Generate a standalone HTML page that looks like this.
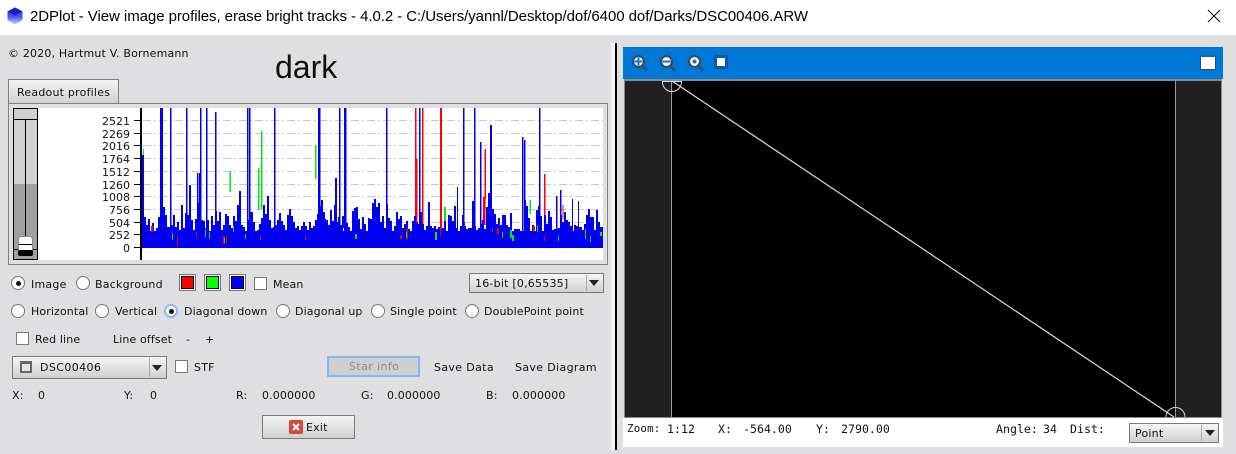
<!DOCTYPE html>
<html><head><meta charset="utf-8"><style>
html,body{margin:0;padding:0;background:#dfdfe1}
#p{position:relative;width:1236px;height:454px;overflow:hidden;background:#dfdfe1;font-family:"DejaVu Sans",sans-serif;font-size:11px;color:#111}
.a{position:absolute;box-sizing:border-box}
.t{position:absolute;white-space:nowrap;line-height:14px;height:14px;font-size:11px;letter-spacing:.22px}
.n{letter-spacing:.12px}
.m{font-family:"DejaVu Sans Mono",monospace;font-size:11.6px;letter-spacing:0}
.r{position:absolute;box-sizing:border-box;width:14px;height:14px;border-radius:50%;background:#fff;border:1px solid #777}
.r.c:after{content:"";position:absolute;left:3.5px;top:3.5px;width:5px;height:5px;border-radius:50%;background:#111}
.cb{position:absolute;box-sizing:border-box;width:13px;height:13px;background:#fff;border:1px solid #777}
.sw{position:absolute;box-sizing:border-box;width:17px;height:17px;border:1px solid #777;background:#fff;padding:1px}
.sw i{display:block;width:13px;height:13px;border:1px solid #000;box-sizing:border-box}
.btn{background:linear-gradient(#f6f6f6,#cfcfcf);border:1px solid #7a7a7a}
.arrow{position:absolute;width:0;height:0;border-left:5.5px solid transparent;border-right:5.5px solid transparent;border-top:6px solid #222}
</style></head><body><div id="p">

<!-- Title bar -->
<div class="a" style="left:0;top:0;width:1236px;height:35px;background:#fff"></div>
<svg class="a" style="left:6px;top:7px" width="18" height="18" viewBox="0 0 18 18"><defs><linearGradient id="g" x1="0" y1="0" x2="0" y2="1"><stop offset="0" stop-color="#2a2ae0"/><stop offset=".55" stop-color="#4a5af0"/><stop offset="1" stop-color="#c8d4ff"/></linearGradient></defs><path d="M9 .5 16.5 4.5V13L9 17.5 1.5 13V4.5Z" fill="url(#g)"/><path d="M9 .5 16.5 4.5 9 8.5 1.5 4.5Z" fill="#1a1ac8"/></svg>
<div class="t" style="left:30px;top:8px;height:18px;line-height:18px;font-family:'Liberation Sans',sans-serif;font-size:15px;letter-spacing:-.06px;color:#000">2DPlot - View image profiles, erase bright tracks - 4.0.2 - C:/Users/yannl/Desktop/dof/6400 dof/Darks/DSC00406.ARW</div>
<svg class="a" style="left:1207px;top:9px" width="14" height="14"><path d="M1 1 13 13M13 1 1 13" stroke="#111" stroke-width="1.1"/></svg>

<!-- Header -->
<div class="t" style="left:8px;top:47px;font-size:11px;letter-spacing:.18px">© 2020, Hartmut V. Bornemann</div>
<div class="t" style="left:275px;top:48px;height:38px;line-height:38px;font-family:'Liberation Sans',sans-serif;font-size:32px;letter-spacing:0;color:#111">dark</div>

<!-- Tab -->
<div class="a" style="left:8px;top:79px;width:111px;height:25px;background:linear-gradient(#f4f4f4,#d0d0d0);border:1px solid #808080;border-bottom:0"></div>
<div class="t" style="left:17px;top:86px">Readout profiles</div>

<!-- Chart panel -->
<div class="a" style="left:8px;top:103px;width:600px;height:162px;border:1px solid #808080;background:#dfdfe1"></div>
<div class="a" style="left:13px;top:108px;width:590px;height:152px;background:#fff"></div>

<svg class="a" style="left:0;top:0" width="620" height="270">
<defs><clipPath id="cl"><rect x="142" y="100" width="461" height="150"/></clipPath></defs>
<!-- slider -->
<rect x="13.500" y="108.500" width="24" height="151" fill="#d0d0d0" stroke="#000"/>
<rect x="14" y="184" width="23" height="75" fill="#a0a0a0"/>
<path d="M14 119.500H37M25.500 119.500V250M14 249.500H37" stroke="#000" fill="none"/>
<rect x="18.500" y="236.500" width="14" height="19" rx="3" fill="#fff" stroke="#888"/>
<rect x="18" y="250" width="15" height="6" rx="2" fill="#000"/>
<path d="M19 244.500H32" stroke="#000"/>
<!-- grid -->
<g stroke="#c8c8c8" stroke-width="1" stroke-dasharray="8 3 2 3" fill="none">
<path d="M143 120.500H603M143 133.500H603M143 145.500H603M143 158.500H603M143 171.500H603M143 184.500H603M143 196.500H603M143 209.500H603M143 222.500H603M143 234.500H603"/>
</g>
<!-- ticks -->
<path d="M134 120.500H141M134 133.500H141M134 145.500H141M134 158.500H141M134 171.500H141M134 184.500H141M134 196.500H141M134 209.500H141M134 222.500H141M134 234.500H141M134 247.500H141" stroke="#000"/>
<rect x="140" y="108" width="2" height="152" fill="#000"/>
<g font-family="DejaVu Sans,sans-serif" font-size="11" fill="#111" text-anchor="end">
<text x="130" y="125">2521</text><text x="130" y="138">2269</text><text x="130" y="150">2016</text><text x="130" y="163">1764</text><text x="130" y="176">1512</text><text x="130" y="189">1260</text><text x="130" y="201">1008</text><text x="130" y="214">756</text><text x="130" y="227">504</text><text x="130" y="239">252</text><text x="130" y="252">0</text>
</g>
<!-- green / red behind -->
<path d="M143 149h1v28h-1zM229.500 171h1.500v21h-1.500zM258 168h1.500v42H258zM261 131h1.500v78H261zM315 145h1.500v34H315zM529.500 200h1.500v14h-1.500zM444 207h2v18h-2zM172 231h2v8h-2zM151 228h2v5h-2z" fill="#00e81a"/>
<path d="M396 212h2v36h-2zM415 108h1.500v51H415zM415 159h2.500v81H415zM422 108h1.500v118H422zM440 108h2v130h-2zM484.500 149h1.500v50h-1.500zM483 197h2.500v28H483zM544 174h1.500v60H544zM562.500 205h1v14h-1zM378 222h2v10h-2zM463 222h2v8h-2z" fill="#f00"/>
<!-- blue bars -->
<rect x="142" y="231" width="461" height="17" fill="#0000f0"/>
<path clip-path="url(#cl)" fill="#0000f0" d="M142 248V155h2V217h2V225h2V219h2V235h2V223h2V233h2V228h2V217h2V108h3V207h2V215h2V227h2V227h2V225h2V215h2V227h2V222h2V230h2V205h2V228h2V213h2V215h2V185h2V220h2V230h2V219h2V203h2V173h2V220h2V221h2V228h2V220h2V232h2V216h2V225h2V211h2V221h2V212h2V230h2V225h2V214h2V216h2V225h2V228h2V216h2V221h2V205h2V191h2V225h2V227h2V234h2V220h2V212h2V212h2V222h2V232h2V230h2V224h2V218h2V205h2V214h2V196h2V220h2V228h2V227h2V225h2V220h2V213h2V221h2V225h2V230h2V215h2V209h2V216h2V222h2V228h2V226h2V230h2V226h2V222h2V226h2V230h2V222h2V228h2V226h2V220h2V214h2V206h2V200h2V212h2V220h2V226h2V228h2V226h2V222h2V178h2V222h2V228h2V226h2V232h2V228H320V215h2V228h2V219h2V220h2V225h2V210h2V221h2V205h2V228h2V217h2V225h2V216h2V233h2V223h2V227h2V234h2V211h2V208h2V207h2V219h2V229h2V217h2V224h2V232h2V218h2V219h2V203h2V199h2V207h2V203h2V222h2V216h2V228h2V204h2V218h2V221h2V235h2V226h2V212h2V219h2V216h2V228h2V224h2V221h2V229h2V232h2V221h2V216h2V222h2V224h2V212h2V224h2V230h2V226h2V202h2V226h2V228h2V226h2V229h2V227h2V229h2V228h2V221h2V232h2V215h2V216h2V221h2V206h2V228h2V232h2V226h2V215h2V226h2V229h2V228h2V228h2V201h2V226h2V230h2V228h2V224h2V220h2V229h2V207h2V212h2V225h2V209h2V214h2V224h2V218h2V225h2V215h2V215h2V225h2V227h2V213h2V233h2V229h2V229h2V229h2V234h2V233h2V200h2V206h2V218h2V231h2V225h2V232h2V210h2V206h2V216h2V234h2V215h2V224h2V211h2V217h2V230h2V229h2V229h2V228h2V215h2V222h2V212h2V220h2V222h2V226h2V232h2V225h2V226h2V227h2V227h2V230h2V224h2V215h2V209h2V217h2V217h2V230h2V210h2V222h2V227h2V227h2V225h2V217h2V230h2V226h2V218h2V219h2V227h2V230h2V223h2V228h2V229h2V215h2V225h2V209h2V231h2V228h2V234h2V220h2V224h2V222h2V222h2V231h2V234h2V236h2V225h2V228h2V222h2V232h2V226h2V228h2V224h2V232h2V225h2V231h2V212h2V233V248Z"/>
<path fill="#0000f0" d="M170 108h1.500v139H170zM186 108h1.500v139H186zM200 108h1.500v139H200zM206 108h1.500v139H206zM215 112h1.500v135H215zM247 108h1.500v139H247zM249 108h1.500v139H249zM274 108h1.500v139H274zM339 108h1.500v139H339zM344 108h2.500v139H344zM386 108h1.500v139H386zM419 108h1.500v139H419zM463 108h1.500v139H463zM474 108h1.500v139H474zM480 142h1.500v105H480zM539 108h1.500v139H539zM522 137h1.500v110H522zM524 140h1.500v107H524zM318 108h2.500v139H318zM197 173h1.500v74H197zM490 125h2v122h-2zM488 193h2v54h-2zM457 187h1v60h-1zM556 196h1.500v51H556zM560 190h1.500v57H560zM572 199h1v48h-1zM578 201h1v46h-1z"/>
<!-- colour flecks on top -->
<path d="M151 226h2v6h-2zM177 236h1v10h-1zM223 236h2v8h-2zM226 236h1v7h-1zM196 232h1v6h-1zM260 236h1v4h-1zM305 236h1v4h-1zM400 235h2v4h-2zM440 230h1v6h-1zM544 236h1v5h-1zM533 226h2v6h-2zM497 228h2v6h-2zM406 229h2v10h-2zM492 228h1v4h-1z" fill="#f00"/>
<path d="M172 233h1v7h-1zM205 229h1v8h-1zM209 232h1v7h-1zM224 238h1v5h-1zM233 226h1v6h-1zM245 234h1v5h-1zM355 234h2v5h-2zM406 232h1v6h-1zM502 232h1v6h-1zM510 230h2v8h-2zM537 225h1v7h-1zM558 236h1v5h-1zM585 229h1v10h-1zM590 236h1v6h-1zM600 232h2v4h-2zM435 232h2v8h-2zM512 235h2v6h-2z" fill="#00e81a"/>
</svg>

<!-- Row 1 -->
<div class="r c" style="left:11px;top:276px"></div><div class="t" style="left:31px;top:278px">Image</div>
<div class="r" style="left:76px;top:276px"></div><div class="t" style="left:95px;top:278px">Background</div>
<div class="sw" style="left:179px;top:274px"><i style="background:#f00"></i></div>
<div class="sw" style="left:204px;top:274px"><i style="background:#0f0"></i></div>
<div class="sw" style="left:229px;top:274px"><i style="background:#00f"></i></div>
<div class="cb" style="left:254px;top:277px"></div><div class="t n" style="left:273px;top:278px">Mean</div>
<div class="a btn" style="left:469px;top:273px;width:135px;height:20px"></div>
<div class="a" style="left:586px;top:275px;width:1px;height:16px;background:#aaa"></div>
<div class="arrow" style="left:589px;top:280px"></div>
<div class="t" style="left:475px;top:277px">16-bit [0,65535]</div>

<!-- Row 2 -->
<div class="r" style="left:11px;top:304px"></div><div class="t n" style="left:31px;top:305px">Horizontal</div>
<div class="r" style="left:95px;top:304px"></div><div class="t n" style="left:115px;top:305px">Vertical</div>
<div class="r c" style="left:164px;top:304px;border-color:#8ab4f8;box-shadow:0 0 0 1px #8ab4f8 inset"></div><div class="t n" style="left:184px;top:305px">Diagonal down</div>
<div class="r" style="left:276px;top:304px"></div><div class="t n" style="left:295px;top:305px">Diagonal up</div>
<div class="r" style="left:371px;top:304px"></div><div class="t n" style="left:390px;top:305px">Single point</div>
<div class="r" style="left:465px;top:304px"></div><div class="t n" style="left:484px;top:305px">DoublePoint point</div>

<!-- Row 3 -->
<div class="cb" style="left:16px;top:332px"></div><div class="t n" style="left:35px;top:333px">Red line</div>
<div class="t n" style="left:113px;top:333px">Line offset</div>
<div class="t" style="left:186px;top:333px">-</div><div class="t" style="left:205px;top:333px">+</div>

<!-- Row 4 -->
<div class="a btn" style="left:12px;top:356px;width:155px;height:23px"></div>
<div class="a" style="left:149px;top:358px;width:1px;height:19px;background:#aaa"></div>
<div class="arrow" style="left:152px;top:365px"></div>
<div class="a" style="left:20px;top:361px;width:12px;height:12px;border:2px solid #666;border-top-width:3px;background:#e4e4e4"></div>
<div class="t" style="left:40px;top:361px;letter-spacing:.4px">DSC00406</div>
<div class="cb" style="left:175px;top:360px"></div><div class="t" style="left:194px;top:361px">STF</div>
<div class="a" style="left:327px;top:356px;width:93px;height:21px;background:#cfcfcf;border:2px solid #8ab4f8"></div>
<div class="t" style="left:349px;top:360px;color:#8c8c8c;letter-spacing:.4px">Star info</div>
<div class="t" style="left:434px;top:361px;letter-spacing:.35px">Save Data</div>
<div class="t" style="left:515px;top:361px;letter-spacing:.35px">Save Diagram</div>

<!-- Row 5 -->
<div class="t" style="left:12px;top:389px">X:</div><div class="t" style="left:38px;top:389px">0</div>
<div class="t" style="left:124px;top:389px">Y:</div><div class="t" style="left:150px;top:389px">0</div>
<div class="t" style="left:236px;top:389px">R:</div><div class="t n" style="left:262px;top:389px">0.000000</div>
<div class="t" style="left:361px;top:389px">G:</div><div class="t n" style="left:387px;top:389px">0.000000</div>
<div class="t" style="left:486px;top:389px">B:</div><div class="t n" style="left:512px;top:389px">0.000000</div>

<!-- Exit -->
<div class="a btn" style="left:262px;top:415px;width:93px;height:24px"></div>
<svg class="a" style="left:289px;top:420px" width="14" height="14"><rect width="14" height="14" rx="2" fill="#cf4a38"/><path d="M4 4 10 10M10 4 4 10" stroke="#fff" stroke-width="2"/></svg>
<div class="t" style="left:306px;top:421px">Exit</div>

<!-- Splitter -->
<div class="a" style="left:611px;top:43px;width:4px;height:407px;background:#f4f4f4"></div>
<div class="a" style="left:615px;top:43px;width:2px;height:407px;background:#000"></div>

<!-- Right panel -->
<div class="a" style="left:623px;top:47px;width:600px;height:32px;background:#0078d7"></div>
<div class="a" style="left:624px;top:79px;width:598px;height:339px;background:#8a8a8a"></div>
<div class="a" style="left:625px;top:81px;width:596px;height:336px;background:#202020"></div>
<div class="a" style="left:672px;top:81px;width:503px;height:336px;background:#000"></div>
<div class="a" style="left:623px;top:418px;width:600px;height:29px;background:#fff"></div>

<svg class="a" style="left:620px;top:44px" width="610" height="380">
<!-- toolbar icons -->
<g fill="#fff" stroke="#3c4a5c" stroke-width="2.200">
<circle cx="18.500" cy="17.500" r="5.500"/><circle cx="46.500" cy="17.500" r="5.500"/><circle cx="74.500" cy="17.500" r="5.500"/>
</g>
<path d="M22.500 22 27 26.500M50.500 22 55 26.500M78.500 22 83 26.500" stroke="#3c4a5c" stroke-width="2.500"/>
<path d="M14.500 17.500H22.500M18.500 13.500V21.500M42.500 17.500H50.500" stroke="#0078d7" stroke-width="2"/>
<circle cx="74.500" cy="17.500" r="2" fill="#0078d7"/>
<rect x="94" y="11" width="14" height="14" fill="#0a58a8"/><rect x="97" y="14" width="8" height="8" fill="#fff"/>
<rect x="580.500" y="12.500" width="15" height="13" fill="#fff" stroke="#3c4a5c"/><rect x="580" y="11" width="16" height="2" fill="#1a62b0"/>
<!-- image overlays -->
<path d="M51.500 37V373M555.500 37V373" stroke="#9a9a9a" fill="none"/>
<path d="M52 37 554 373" stroke="#dcdcdc" stroke-width="1.200" fill="none"/>
<path d="M42 37.500H62M42.500 38a9.500 9.500 0 0 0 19 0" stroke="#dcdcdc" fill="none"/>
<path d="M546 373a9.500 9.500 0 0 1 19 0" stroke="#dcdcdc" fill="none"/>
</svg>

<!-- Status -->
<div class="t m" style="left:627px;top:422px;font-size:10.8px;letter-spacing:.2px">Zoom:</div>
<div class="t m" style="left:667px;top:422px">1:12</div>
<div class="t m" style="left:718px;top:422px">X:</div>
<div class="t m" style="left:743px;top:422px">-564.00</div>
<div class="t m" style="left:816px;top:422px">Y:</div>
<div class="t m" style="left:841px;top:422px">2790.00</div>
<div class="t m" style="left:996px;top:422px">Angle:</div>
<div class="t m" style="left:1043px;top:422px">34</div>
<div class="t m" style="left:1070px;top:422px">Dist:</div>
<div class="a btn" style="left:1129px;top:423px;width:90px;height:20px"></div>
<div class="a" style="left:1201px;top:425px;width:1px;height:16px;background:#aaa"></div>
<div class="arrow" style="left:1205px;top:430px"></div>
<div class="t" style="left:1135px;top:427px">Point</div>

</div></body></html>
